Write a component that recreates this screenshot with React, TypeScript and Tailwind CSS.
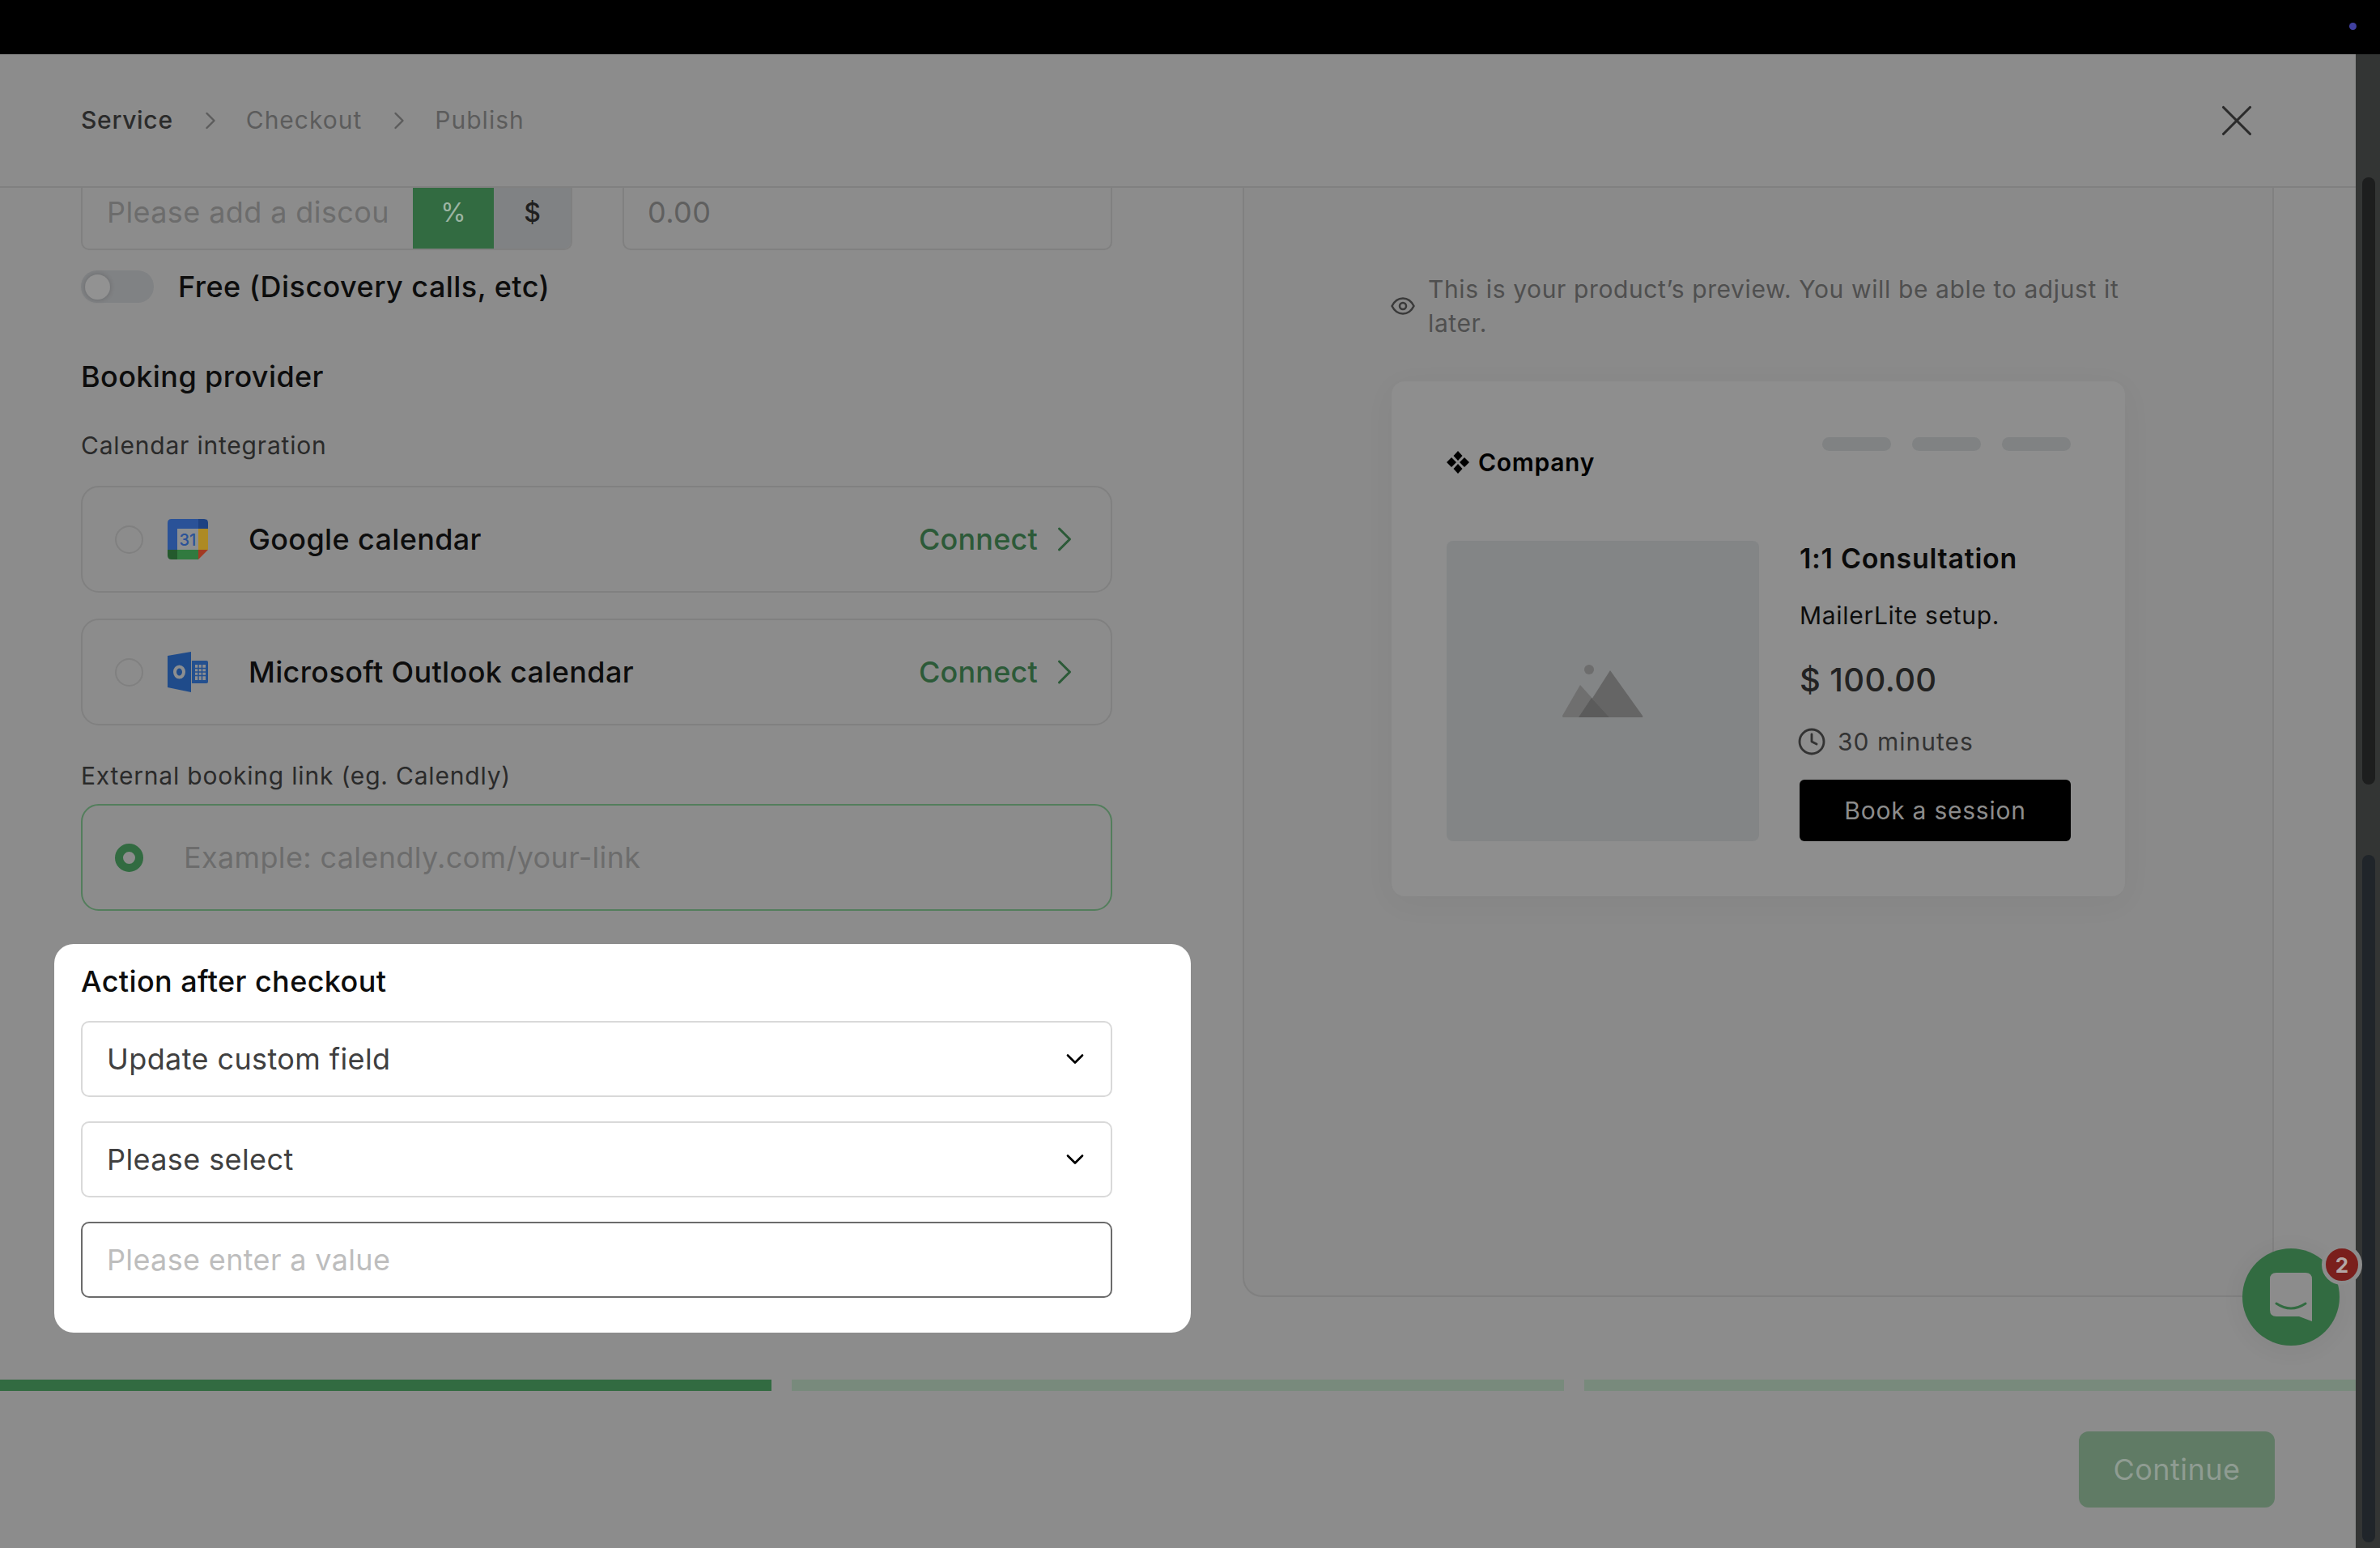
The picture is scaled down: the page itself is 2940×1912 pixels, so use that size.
import { ChevronDown, ChevronRight, X, Clock } from "lucide-react";

function GoogleCalendarIcon() {
  return (
    <svg width="50" height="50" viewBox="0 0 50 50" className="shrink-0">
      <path d="M5 0H38V12H12V38H0V5Q0 0 5 0Z" fill="#2a5298" />
      <path d="M38 0H45Q50 0 50 5V12H38Z" fill="#1e4282" />
      <rect x="38" y="12" width="12" height="26" fill="#ad8a24" />
      <rect x="12" y="38" width="26" height="12" fill="#317a3f" />
      <path d="M0 38H12V50H5Q0 50 0 45Z" fill="#245a2d" />
      <path d="M38 38H50L38 50Z" fill="#a33a22" />
      <rect x="12" y="12" width="26" height="26" fill="#8c8e90" />
      <text x="25" y="32.5" textAnchor="middle" fontSize="20" fontWeight="500" fill="#2a5298">
        31
      </text>
    </svg>
  );
}

function OutlookIcon() {
  return (
    <svg width="50" height="50" viewBox="0 0 50 50" className="shrink-0">
      <path d="M30 11H48Q50 11 50 13V37Q50 39 48 39H30Z" fill="#24508f" />
      <path d="M34 16H47V35H34Z" fill="#8c8e90" />
      <path d="M34 20.5H47M34 25H47M34 29.5H47M38 16V35M42.5 16V35" stroke="#24508f" strokeWidth="1.5" />
      <path d="M0 5L29 0V50L0 44Z" fill="#1f4b8a" />
      <ellipse cx="14.5" cy="25" rx="5.5" ry="6.5" fill="none" stroke="#8c8e90" strokeWidth="4" />
    </svg>
  );
}

function MountainIcon() {
  return (
    <svg width="100" height="66" viewBox="0 0 100 66" className="block">
      <circle cx="33" cy="6" r="6" fill="#6d6d6d" />
      <path d="M59 7L99 63Q100 65 98 65H22Z" fill="#656565" />
      <path d="M22 25L58 65H1Q0 65 0 63Z" fill="#6f6f6f" />
      <path d="M36 41L58 65H20Z" fill="#5b5b5b" />
    </svg>
  );
}

function ChatIcon() {
  return (
    <svg width="52" height="60" viewBox="0 0 52 60" className="block">
      <path d="M8 0H44Q52 0 52 8V60L36 54H8Q0 54 0 46V8Q0 0 8 0Z" fill="#8c8c8c" />
      <path d="M8 38Q26 50 44 38" fill="none" stroke="#326b41" strokeWidth="3" strokeLinecap="round" />
    </svg>
  );
}

function CalendarRow({ icon, name }: { icon: React.ReactNode; name: string }) {
  return (
    <div className="flex h-[132px] items-center rounded-[22px] border-2 border-[#808080] pl-[40px] pr-[31px]">
      <div className="h-[35px] w-[35px] shrink-0 rounded-full border-2 border-[#808080]" />
      <div className="ml-[30px]">{icon}</div>
      <span className="ml-[50px] text-[36px] font-medium tracking-[0.35px] text-[#0d0d0d]">{name}</span>
      <span className="ml-auto text-[36px] font-medium tracking-[0.2px] text-[#2c5a38]">Connect</span>
      <ChevronRight className="ml-[7px] text-[#2c5a38]" size={52} strokeWidth={1.4} />
    </div>
  );
}

function SelectField({ value }: { value: string }) {
  return (
    <div className="flex h-[94px] items-center justify-between rounded-[10px] border-2 border-[#d9d9d9] pl-[30px] pr-[26px]">
      <span className="text-[36px] tracking-[0.4px] text-[#404040]">{value}</span>
      <ChevronDown className="text-black" size={36} strokeWidth={1.8} />
    </div>
  );
}

export default function App() {
  return (
    <div className="relative flex h-[1912px] w-[2940px] flex-col overflow-hidden bg-black font-[Inter,sans-serif]">
      <div className="flex h-[67px] shrink-0 items-center justify-end pb-[3px] pr-[29px]">
        <div className="h-[9px] w-[9px] rounded-full bg-[#4040a0]" />
      </div>

      <div className="flex min-h-0 flex-1">
        <div className="flex w-[2910px] flex-col bg-[#8c8c8c]">
          <header className="flex h-[165px] shrink-0 items-center justify-between border-b-2 border-[#808080] pl-[100px] pr-[114px]">
            <nav className="flex items-center text-[30px] tracking-[1px] text-[#5c5c5c]">
              <span className="font-medium tracking-[0.7px] text-[#2b2b2b]">Service</span>
              <ChevronRight className="ml-[28px] mr-[26px]" size={36} strokeWidth={1.6} />
              <span>Checkout</span>
              <ChevronRight className="ml-[28px] mr-[26px]" size={36} strokeWidth={1.6} />
              <span>Publish</span>
            </nav>
            <X className="text-[#2b2b2b]" size={66} strokeWidth={1.15} />
          </header>

          <div className="flex min-h-0 flex-1 overflow-hidden">
            <div className="w-[1535px] shrink-0 pl-[100px] pr-[161px]">
              <div className="mt-[-17px] flex gap-[62px]">
                <div className="flex h-[94px] w-[607px] overflow-hidden rounded-[10px] border-2 border-[#808080]">
                  <input
                    placeholder="Please add a discount"
                    className="w-[408px] bg-transparent pl-[30px] pr-[30px] text-[36px] tracking-[0.4px] outline-none placeholder:text-[#6c6c6c]"
                  />
                  <div className="flex w-[100px] items-center justify-center bg-[#326b41] pt-[2px] text-[32px] text-[#9db5a3]">%</div>
                  <div className="flex flex-1 items-center justify-center bg-[#808284] pt-[2px] text-[32px] font-medium text-[#1f1f1f]">$</div>
                </div>
                <div className="flex h-[94px] w-[605px] items-center rounded-[10px] border-2 border-[#808080] pl-[29px] text-[36px] tracking-[0.4px] text-[#5f5f5f]">
                  0.00
                </div>
              </div>

              <div className="mt-[25px] flex h-[40px] items-center">
                <div className="flex h-[40px] w-[90px] items-center rounded-full bg-[#808284] pl-[5px]">
                  <div className="h-[31px] w-[31px] rounded-full bg-[#929292] shadow-[0_0_6px_rgba(0,0,0,0.2)]" />
                </div>
                <span className="ml-[30px] text-[36px] font-medium tracking-[0.45px] text-[#0d0d0d]">Free (Discovery calls, etc)</span>
              </div>

              <h2 className="mt-[69px] text-[36px] font-medium leading-[44px] tracking-[0.4px] text-[#0d0d0d]">Booking provider</h2>
              <p className="mt-[43px] text-[30px] leading-[40px] tracking-[0.8px] text-[#2a2a2a]">Calendar integration</p>

              <div className="mt-[30px] flex flex-col gap-[32px]">
                <CalendarRow icon={<GoogleCalendarIcon />} name="Google calendar" />
                <CalendarRow icon={<OutlookIcon />} name="Microsoft Outlook calendar" />
              </div>

              <p className="mt-[42px] text-[30px] leading-[40px] tracking-[0.8px] text-[#2a2a2a]">External booking link (eg. Calendly)</p>

              <div className="mt-[15px] flex h-[132px] items-center rounded-[22px] border-2 border-[#537e5c] pl-[40px]">
                <div className="h-[35px] w-[35px] shrink-0 rounded-full border-[10px] border-[#326b41]" />
                <span className="ml-[50px] text-[36px] tracking-[0.35px] text-[#6c6c6c]">Example: calendly.com/your-link</span>
              </div>

              <section className="ml-[-33px] mr-[-97px] mt-[41px] h-[480px] rounded-[24px] bg-white pl-[33px] pr-[97px] pt-[24px]">
                <h2 className="text-[36px] font-medium leading-[44px] tracking-[0.4px] text-[#0d0d0d]">Action after checkout</h2>
                <div className="mt-[27px] flex flex-col gap-[30px]">
                  <SelectField value="Update custom field" />
                  <SelectField value="Please select" />
                  <input
                    placeholder="Please enter a value"
                    className="h-[94px] rounded-[10px] border-2 border-[#6b6b6b] pl-[30px] text-[36px] tracking-[0.35px] outline-none placeholder:text-[#bdbdbd]"
                  />
                </div>
              </section>
            </div>

            <aside className="h-[1370px] w-[1274px] shrink-0 rounded-b-[24px] border-x-2 border-b-2 border-[#808080] bg-[#8a8a8a] pl-[182px] pt-[104px]">
              <div className="ml-[-1px] flex w-[907px] items-center gap-[16px]">
                <svg width="30" height="22" viewBox="0 0 30 22" fill="none" stroke="#3a3a3a" strokeWidth="2.5" className="shrink-0">
                  <path d="M1.5 11C5 4 10 1.5 15 1.5S25 4 28.5 11C25 18 20 20.5 15 20.5S5 18 1.5 11Z" />
                  <circle cx="15" cy="11" r="4" />
                </svg>
                <p className="text-[30px] leading-[42px] tracking-[0.62px] text-[#4f4f4f]">
                  This is your product’s preview. You will be able to adjust it later.
                </p>
              </div>

              <div className="mt-[51px] h-[636px] w-[906px] rounded-[16px] bg-[#8e8e8e] pl-[68px] pr-[67px] pt-[69px] shadow-[0_8px_40px_rgba(0,0,0,0.04)]">
                <div className="flex h-[128px] items-start justify-between">
                  <div className="mt-[14px] flex items-center gap-[11px]">
                    <svg width="28" height="28" viewBox="0 0 28 28" fill="#000">
                      <path d="M14 0L19.5 6L14 12L8.5 6Z" />
                      <path d="M6 8L12 14L6 20L0 14Z" />
                      <path d="M22 8L28 14L22 20L16 14Z" />
                      <path d="M14 16L19.5 22L14 28L8.5 22Z" />
                    </svg>
                    <span className="text-[30px] font-semibold leading-[34px] tracking-[0.7px] text-black">Company</span>
                  </div>
                  <div className="flex gap-[26px]">
                    <div className="h-[17px] w-[85px] rounded-full bg-[#808283]" />
                    <div className="h-[17px] w-[85px] rounded-full bg-[#808283]" />
                    <div className="h-[17px] w-[85px] rounded-full bg-[#808283]" />
                  </div>
                </div>

                <div className="flex gap-[50px]">
                  <div className="flex h-[371px] w-[386px] items-center justify-center rounded-[8px] bg-[#838586]">
                    <MountainIcon />
                  </div>
                  <div className="flex w-[335px] flex-col pt-[1px]">
                    <h3 className="text-[34px] font-semibold leading-[42px] tracking-[0.7px] text-[#0a0a0a]">1:1 Consultation</h3>
                    <p className="mt-[29px] text-[30px] leading-[40px] tracking-[0.7px] text-[#0d0d0d]">MailerLite setup.</p>
                    <p className="mt-[36px] text-[40px] font-medium leading-[48px] tracking-[0.4px] text-[#222222]">$ 100.00</p>
                    <div className="mt-[32px] flex h-[40px] items-center gap-[14px] text-[30px] tracking-[1px] text-[#333333]">
                      <Clock className="ml-[-3px]" size={36} strokeWidth={1.9} />
                      <span>30 minutes</span>
                    </div>
                    <div className="mt-[27px] flex h-[76px] items-center justify-center rounded-[6px] bg-black text-[30px] tracking-[0.75px] text-[#8c8c8c]">
                      Book a session
                    </div>
                  </div>
                </div>
              </div>
            </aside>
          </div>

          <div className="flex h-[14px] shrink-0 gap-[25px]">
            <div className="flex-1 bg-[#326b41]" />
            <div className="flex-1 bg-[#788a7c]" />
            <div className="flex-1 bg-[#788a7c]" />
          </div>

          <footer className="flex h-[194px] shrink-0 justify-end pr-[100px] pt-[50px]">
            <div className="flex h-[94px] w-[242px] items-center justify-center rounded-[12px] bg-[#607b65] text-[36px] tracking-[0.5px] text-[#8f9c92]">
              Continue
            </div>
          </footer>
        </div>

        <div className="w-[30px] shrink-0 bg-[#333534] pl-[8px] pt-[152px]">
          <div className="h-[750px] w-[16px] rounded-full bg-[#1d1e1e]" />
          <div className="mt-[87px] h-[849px] w-[16px] rounded-full bg-[#20252a]" />
        </div>
      </div>

      <div className="absolute left-[2770px] top-[1542px] flex h-[120px] w-[120px] items-center justify-center rounded-full bg-[#326b41] shadow-[0_4px_30px_rgba(0,0,0,0.06)]">
        <ChatIcon />
        <div className="absolute left-[98px] top-[-5px] flex h-[50px] w-[50px] items-center justify-center rounded-full border-[5px] border-[#8c8c8c] bg-[#7a1f1c] text-[26px] font-bold text-[#b3a7a6]">
          2
        </div>
      </div>
    </div>
  );
}
